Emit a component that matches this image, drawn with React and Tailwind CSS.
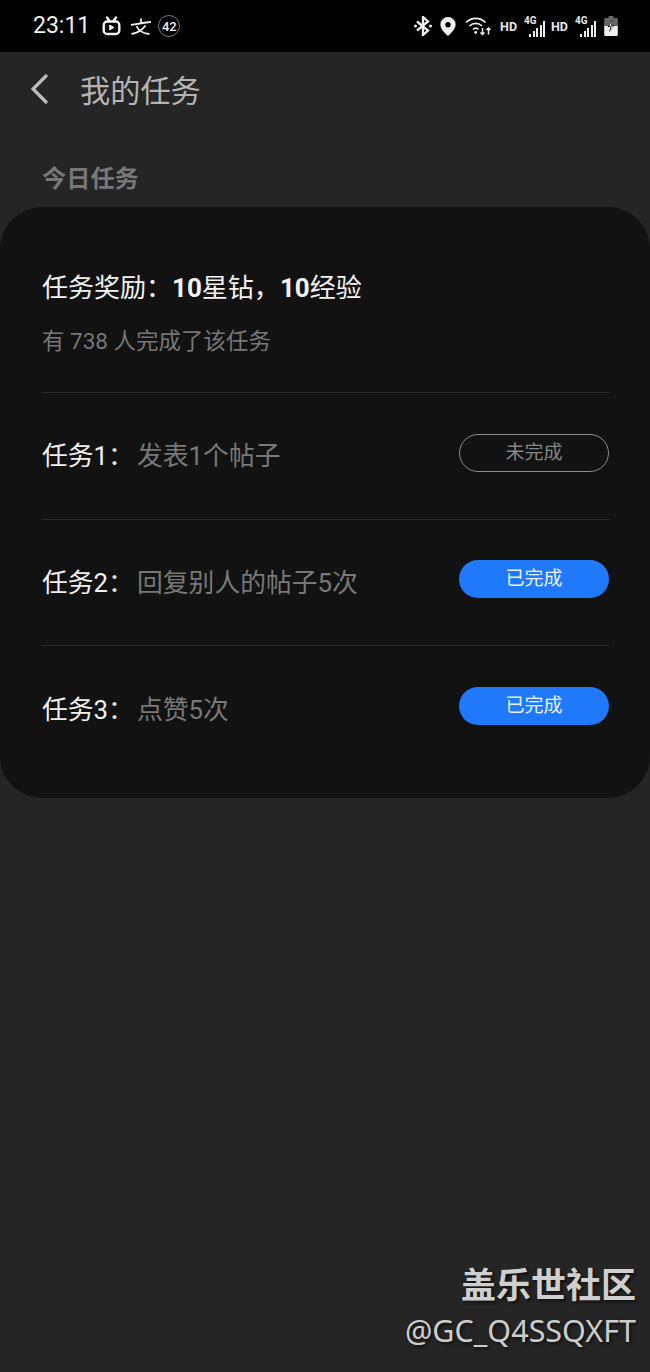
import React from "react";

const FONT = "font-['Roboto','Noto_Sans_CJK_SC',sans-serif]";

const TvIcon = () => (
  <svg width="19" height="20" viewBox="0 0 19 20" fill="none" stroke="#f2f2f2" strokeWidth="2.400">
    <path d="M5 1.500L7.500 5M14 1.500L11.500 5" strokeLinecap="round" />
    <rect x="1.700" y="5.500" width="15.600" height="12.500" rx="3.500" />
    <path d="M7.700 9v5l4.200-2.500z" fill="#f2f2f2" strokeWidth="1" />
  </svg>
);

const Signal = () => (
  <div className="relative w-[21px] h-[21px]">
    <span className="absolute left-0 top-0 text-[10px] font-bold leading-none">4G</span>
    <div className="absolute bottom-0 right-0 flex items-end gap-[1.500px]">
      <div className="w-[2px] h-[3px] bg-[#eee]" />
      <div className="w-[2px] h-[6px] bg-[#eee]" />
      <div className="w-[2px] h-[9px] bg-[#eee]" />
      <div className="w-[2px] h-[12px] bg-[#eee]" />
      <div className="w-[2px] h-[16px] bg-[#eee]" />
    </div>
  </div>
);

const StatusRight = () => (
  <div className="flex items-center text-[#e8e8e8]">
    {/* bluetooth */}
    <svg width="18" height="20" viewBox="0 0 18 20" fill="none" stroke="#eee" strokeWidth="2.300" className="mr-[8px]">
      <path d="M3 5.500l11 9-5 4.500V1l5 4.500-11 9" />
      <circle cx="1.500" cy="10" r="1.500" fill="#eee" stroke="none" />
      <circle cx="16.500" cy="10" r="1.500" fill="#eee" stroke="none" />
    </svg>
    {/* location */}
    <svg width="16" height="19" viewBox="0 0 16 19" className="mr-[9px]">
      <path
        fillRule="evenodd"
        d="M8 0a7.600 7.600 0 0 1 7.600 7.600C15.600 12 11 16.500 8 19 5 16.500.4 12 .4 7.600A7.600 7.600 0 0 1 8 0zm0 5a2.700 2.700 0 1 0 0 5.400A2.700 2.700 0 0 0 8 5z"
        fill="#f2f2f2"
      />
    </svg>
    {/* wifi */}
    <svg width="26" height="20" viewBox="0 0 26 20" fill="none" stroke="#eee" strokeWidth="1.700" className="mr-[9px]">
      <path d="M1 6.500C6.500 1 15 1 20.500 6.500" />
      <path d="M4.500 10C8 6.500 13.500 6.500 17 10" />
      <path d="M8 13.500c1.600-1.600 3.900-1.600 5.500 0" />
      <circle cx="10.700" cy="16.500" r="1.400" fill="#eee" stroke="none" />
      <path d="M17.500 12v6.500M15.500 16.500l2 2 2-2M23.500 18.500V12M21.500 14l2-2 2 2" strokeWidth="1.500" />
    </svg>
    <span className="text-[12.500px] font-bold leading-none mr-[7px] mt-[2px]">HD</span>
    <Signal />
    <span className="text-[12.500px] font-bold leading-none ml-[6px] mr-[7px] mt-[2px]">HD</span>
    <Signal />
    {/* battery */}
    <svg width="14" height="20" viewBox="0 0 14 20" className="ml-[8px]">
      <path d="M4.500 0h5v2h3a1.300 1.300 0 0 1 1.300 1.300V10H.2V3.300A1.300 1.300 0 0 1 1.500 2h3z" fill="#666" />
      <path d="M.2 10h13.600v8.700A1.300 1.300 0 0 1 12.500 20h-11A1.300 1.300 0 0 1 .2 18.700z" fill="#efefef" />
      <path d="M8.500 3.500L3.500 11H6.500L5 16.500 10.500 9H7.500z" fill="#000" />
      <path d="M8 5L4.800 10.200H7.400L6.300 14.500 9.400 9.700H6.800z" fill="#efefef" />
    </svg>
  </div>
);

const TaskRow = ({ label, desc, done, className }) => (
  <div className={`flex items-center justify-between ${className}`}>
    <div className="text-[25.800px] leading-none flex items-center pt-[2px]">
      <span className="text-[#f0f0f0] w-[95px]">{label}</span>
      <span className="text-[#787878]">{desc}</span>
    </div>
    {done ? (
      <div className="w-[150px] h-[38px] mb-[7px] rounded-full bg-[#2079fb] text-[#e8f1ff] text-[19px] flex items-center justify-center">
        已完成
      </div>
    ) : (
      <div className="w-[150px] h-[38px] mb-[6px] rounded-full border border-[#8c8c8c] text-[#858585] text-[19px] flex items-center justify-center">
        未完成
      </div>
    )}
  </div>
);

export default function App() {
  return (
    <div className={`${FONT} w-[650px] h-[1372px] bg-[#252525] flex flex-col overflow-hidden`}>
      {/* status bar */}
      <div className="h-[52px] bg-black flex items-center justify-between pl-[33px] pr-[32px] shrink-0">
        <div className="flex items-center">
          <span className="text-[23px] text-[#f0f0f0] mr-[12px]">23:11</span>
          <TvIcon />
          <svg width="22" height="20" viewBox="0 0 22 20" fill="none" stroke="#eee" strokeWidth="1.800" className="ml-[9px] mr-[6px]">
            <path d="M1 9c6-1 14-2.500 20-3M11 2.500V7.500M6.500 10c2 4.500 7 7.500 13 8M15.500 9.500C12 14.500 7 17 1.500 18" />
          </svg>
          <div className="w-[22px] h-[22px] rounded-full border border-[#777] flex items-center justify-center text-[13px] font-medium text-[#eee] leading-none">
            42
          </div>
        </div>
        <StatusRight />
      </div>

      {/* header */}
      <div className="h-[78px] flex items-center pl-[31px] shrink-0">
        <svg width="17" height="30" viewBox="0 0 17 30" fill="none" stroke="#bdbdbd" strokeWidth="3.200" strokeLinecap="round" className="mb-[4px]">
          <path d="M15 2L2 15l13 13" />
        </svg>
        <span className="ml-[32px] pt-[2px] text-[30.200px] text-[#b4b4b4]">我的任务</span>
      </div>

      <div className="pl-[42px] pt-[37px] h-[77px] text-[24.200px] leading-none font-bold text-[#777777] shrink-0">今日任务</div>

      {/* card */}
      <div className="h-[591px] bg-[#121212] rounded-[42px] pl-[42px] pr-[41px] shrink-0">
        <div className="h-[186px] border-b border-[#2a2a2a] pt-[68px]">
          <div className="text-[26px] leading-none text-[#f2f2f2]">
            任务奖励：<span className="font-bold">10</span>星钻，<span className="font-bold">10</span>经验
          </div>
          <div className="mt-[29px] text-[22.500px] leading-none text-[#767676]">有 738 人完成了该任务</div>
        </div>
        <TaskRow label="任务1：" desc="发表1个帖子" className="h-[127px] border-b border-[#2a2a2a]" />
        <TaskRow label="任务2：" desc="回复别人的帖子5次" done className="h-[126px] border-b border-[#2a2a2a]" />
        <TaskRow label="任务3：" desc="点赞5次" done className="h-[127px]" />
      </div>

      {/* watermark */}
      <div className="mt-auto pr-[14px] pb-[21px] flex flex-col items-end [text-shadow:2px_2px_3px_#111]">
        <span className="text-[35px] leading-[44px] font-bold text-[#cfcfcf]">盖乐世社区</span>
        <span className="text-[30.500px] leading-[42px] text-[#cccccc] font-['Noto_Sans','Noto_Sans_CJK_SC',sans-serif]">@GC_Q4SSQXFT</span>
      </div>
    </div>
  );
}
